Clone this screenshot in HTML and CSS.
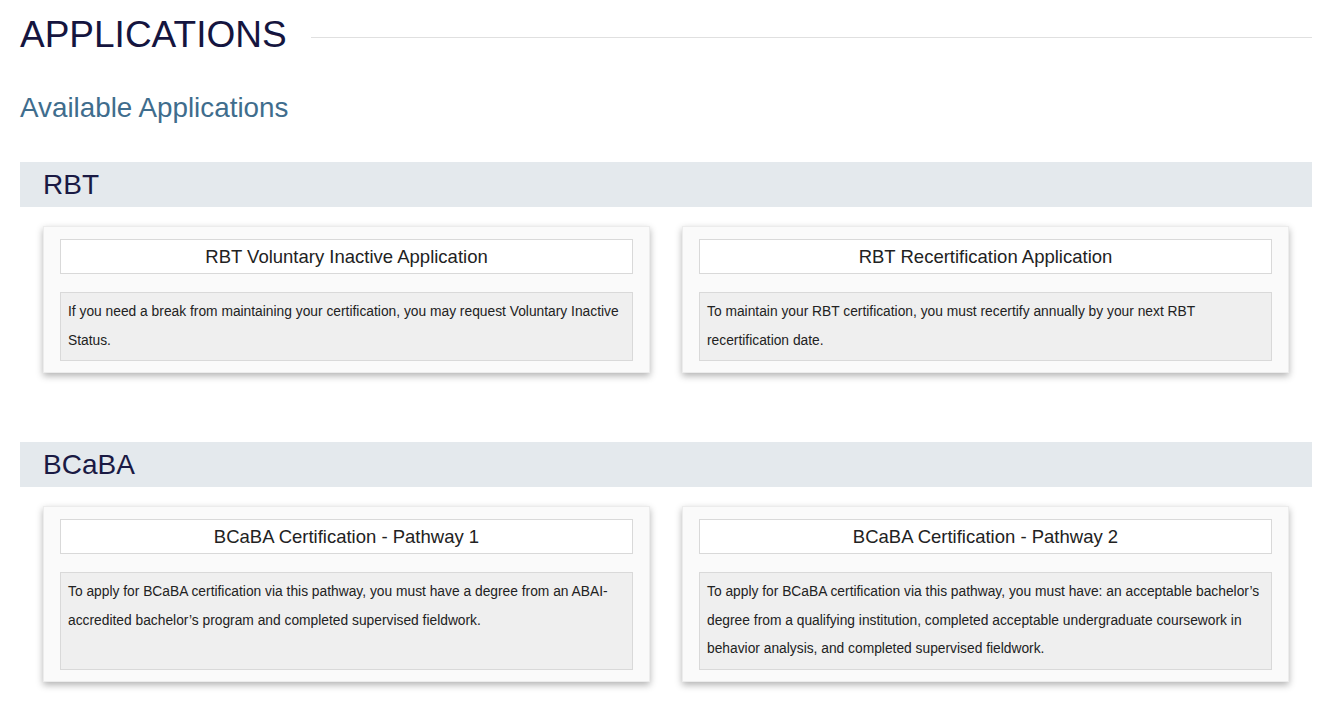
FILE: index.html
```html
<!DOCTYPE html>
<html lang="en">
<head>
  <meta charset="UTF-8" />
  <meta name="viewport" content="width=device-width, initial-scale=1.0" />
  <title>Applications</title>
  <link rel="stylesheet" href="styles.css">
</head>
<body>
  <div class="page-title">
    <h1>APPLICATIONS</h1>
    <span class="title-rule"></span>
  </div>

  <h2 class="subtitle">Available Applications</h2>

  <section class="app-group">
    <div class="group-header">RBT</div>
    <div class="card-grid">
      <div class="app-card">
        <div class="app-name">RBT Voluntary Inactive Application</div>
        <div class="app-desc">If you need a break from maintaining your certification, you may request Voluntary Inactive Status.</div>
      </div>
      <div class="app-card">
        <div class="app-name">RBT Recertification Application</div>
        <div class="app-desc">To maintain your RBT certification, you must recertify annually by your next RBT recertification date.</div>
      </div>
    </div>
  </section>

  <section class="app-group">
    <div class="group-header">BCaBA</div>
    <div class="card-grid">
      <div class="app-card">
        <div class="app-name">BCaBA Certification - Pathway 1</div>
        <div class="app-desc">To apply for BCaBA certification via this pathway, you must have a degree from an ABAI-accredited bachelor’s program and completed supervised fieldwork.</div>
      </div>
      <div class="app-card">
        <div class="app-name">BCaBA Certification - Pathway 2</div>
        <div class="app-desc">To apply for BCaBA certification via this pathway, you must have: an acceptable bachelor’s degree from a qualifying institution, completed acceptable undergraduate coursework in behavior analysis, and completed supervised fieldwork.</div>
      </div>
    </div>
  </section>
</body>
</html>
```

FILE: styles.css
```css
body {
  margin: 0;
  padding: 15px 21px 40px 20px;
  font-family: 'Liberation Sans', Arial, sans-serif;
  background: #ffffff;
  color: #222;
}

.page-title {
  display: flex;
  align-items: center;
  gap: 24px;
}
.page-title h1 {
  margin: 0;
  font-size: 37px;
  line-height: 40px;
  font-weight: normal;
  color: #15153f;
}
.title-rule {
  flex: 1;
  height: 1px;
  background: #e0e0e0;
  margin-top: 4px;
}

.subtitle {
  margin: 37px 0 0;
  font-size: 27.8px;
  line-height: 32px;
  font-weight: normal;
  color: #3f6d8d;
}

.app-group {
  margin-top: 69px;
}
.subtitle + .app-group {
  margin-top: 38px;
}

.group-header {
  background: #e4e9ed;
  height: 45px;
  line-height: 45px;
  padding-left: 23px;
  font-size: 28px;
  color: #1a1a44;
}

.card-grid {
  display: grid;
  grid-template-columns: 1fr 1fr;
  gap: 32px;
  padding: 19px 23px 0;
}

.app-card {
  display: flex;
  flex-direction: column;
  background: #fafafa;
  border: 1px solid #ececec;
  padding: 12px 16px 11px;
  box-shadow: 0 3px 7px rgba(0, 0, 0, 0.3);
}

.app-name {
  background: #fff;
  border: 1px solid #d9d9d9;
  height: 33px;
  line-height: 33px;
  text-align: center;
  font-size: 18.5px;
  color: #222;
}

.app-desc {
  flex: 1;
  margin-top: 18px;
  background: #efefef;
  border: 1px solid #d9d9d9;
  padding: 5px 7px 5px;
  font-size: 13.8px;
  line-height: 28.5px;
  color: #222;
}
```
